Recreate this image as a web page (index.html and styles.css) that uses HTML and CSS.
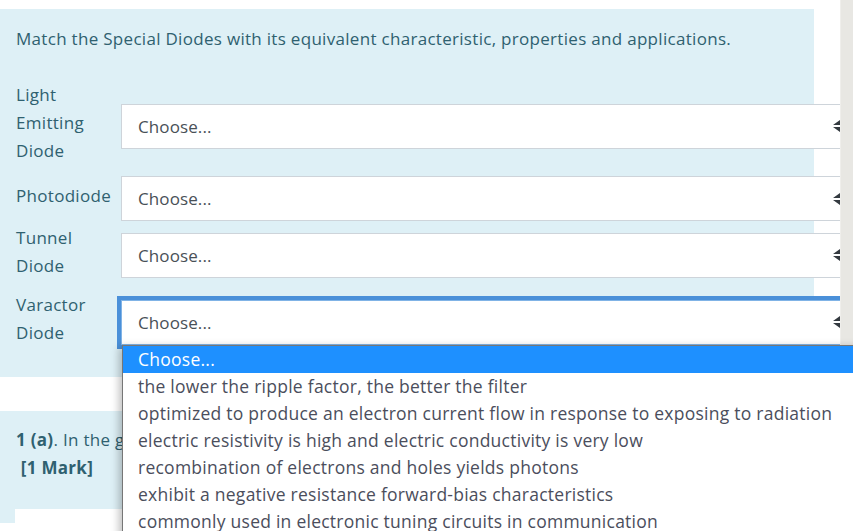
FILE: index.html
```html
<!DOCTYPE html>
<html lang="en">
<head>
<meta charset="utf-8">
<title>Match the Special Diodes</title>
<link rel="stylesheet" href="styles.css">
</head>
<body>
<div class="page">
  <section class="panel panel-main">
    <p class="prompt">Match the Special Diodes with its equivalent characteristic, properties and applications.</p>
    <div class="match">
      <div class="row row-1">
        <div class="label">Light Emitting Diode</div>
        <div class="select"><span class="value">Choose...</span><svg class="arrows" viewBox="0 0 14 12" width="14" height="12"><path d="M0 5 L7 0 L14 5 Z M0 7 L14 7 L7 12 Z"/></svg></div>
      </div>
      <div class="row row-2">
        <div class="label">Photodiode</div>
        <div class="select"><span class="value">Choose...</span><svg class="arrows" viewBox="0 0 14 12" width="14" height="12"><path d="M0 5 L7 0 L14 5 Z M0 7 L14 7 L7 12 Z"/></svg></div>
      </div>
      <div class="row row-3">
        <div class="label">Tunnel Diode</div>
        <div class="select"><span class="value">Choose...</span><svg class="arrows" viewBox="0 0 14 12" width="14" height="12"><path d="M0 5 L7 0 L14 5 Z M0 7 L14 7 L7 12 Z"/></svg></div>
      </div>
      <div class="row row-4">
        <div class="label">Varactor Diode</div>
        <div class="select is-focused"><span class="value">Choose...</span><svg class="arrows" viewBox="0 0 14 12" width="14" height="12"><path d="M0 5 L7 0 L14 5 Z M0 7 L14 7 L7 12 Z"/></svg></div>
      </div>
    </div>
  </section>
  <section class="panel panel-next">
    <p class="question"><strong>1 (a)</strong>. In the given circuit, determine the output voltage of the diode.<br>&nbsp;<strong>[1 Mark]</strong></p>
    <div class="answer"></div>
  </section>
</div>
<div class="scrollbar"></div>
<ul class="dropdown">
  <li class="option is-active">Choose...</li>
  <li class="option">the lower the ripple factor, the better the filter</li>
  <li class="option">optimized to produce an electron current flow in response to exposing to radiation</li>
  <li class="option">electric resistivity is high and electric conductivity is very low</li>
  <li class="option">recombination of electrons and holes yields photons</li>
  <li class="option">exhibit a negative resistance forward-bias characteristics</li>
  <li class="option">commonly used in electronic tuning circuits in communication</li>
</ul>
</body>
</html>
```
FILE: styles.css
```css
html, body {
  margin: 0;
  padding: 0;
  background: #ffffff;
  overflow: hidden;
  width: 853px;
  height: 531px;
}
body {
  font-family: "Open Sans", "Noto Sans", sans-serif;
  font-size: 17px;
  letter-spacing: 0.3px;
  color: #2f6170;
  position: relative;
}
.page {
  padding-top: 9px;
}
.panel {
  width: 814px;
  box-sizing: border-box;
  background: #def0f6;
}
.panel-main {
  height: 368px;
  padding: 16px 16px 0 16px;
}
.prompt {
  margin: 0;
  line-height: 28px;
  white-space: nowrap;
}
.match {
  margin-top: 28px;
}
.row {
  display: flex;
  align-items: center;
}
.row-2 { margin-top: 5px; }
.row-3 { margin-top: 3px; }
.row-4 { margin-top: 11px; }
.label {
  width: 97px;
  margin-right: 8px;
  line-height: 28px;
  flex: none;
}
.select {
  flex: none;
  width: 735px;
  height: 45px;
  margin-top: 6px;
  box-sizing: border-box;
  border: 1px solid #ced4da;
  background: #ffffff;
  display: flex;
  align-items: center;
  justify-content: space-between;
  padding: 0 8px 0 16px;
  color: #495057;
  letter-spacing: 0.1px;
}
.select.is-focused {
  outline: 4px solid #4a90d9;
  border-color: #80b3e6;
}
.arrows {
  fill: #343a40;
  display: block;
}
.panel-next {
  margin-top: 34px;
  height: 112px;
  padding: 15px 16px 0 16px;
}
.question {
  margin: 0;
  line-height: 28px;
  white-space: nowrap;
}
.answer {
  margin-top: 27px;
  margin-left: -1px;
  height: 40px;
  background: #ffffff;
}
.scrollbar {
  position: absolute;
  top: 0;
  right: 0;
  width: 13px;
  height: 531px;
  background: #e8e7e3;
  border-left: 1px solid #efeeeb;
  box-sizing: border-box;
}
.dropdown {
  position: absolute;
  left: 122px;
  top: 345px;
  width: 760px;
  height: 220px;
  margin: 0;
  padding: 0;
  list-style: none;
  background: #ffffff;
  border: 1px solid #767676;
  box-shadow: -3px 2px 8px rgba(0, 0, 0, 0.25);
  color: #4b4e5c;
  font-size: 17.5px;
  letter-spacing: 0.25px;
}
.option {
  height: 27px;
  line-height: 27px;
  padding-left: 15px;
  white-space: nowrap;
}
.option.is-active {
  background: #1e90ff;
  color: #ffffff;
}
```
